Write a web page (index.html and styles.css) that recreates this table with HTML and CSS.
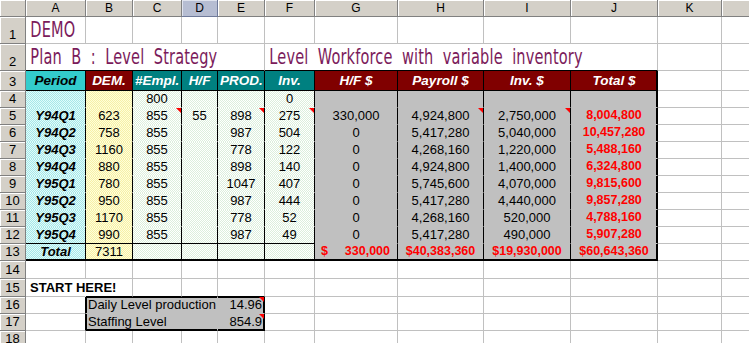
FILE: index.html
```html
<!DOCTYPE html>
<html>
<head>
<meta charset="utf-8">
<title>Level Strategy</title>
<link rel="stylesheet" href="styles.css">
</head>
<body>
<table class="sheet">
<colgroup>
<col class="w-rh"><col class="w-a"><col class="w-b"><col class="w-c"><col class="w-d"><col class="w-e"><col class="w-f"><col class="w-g"><col class="w-h"><col class="w-i"><col class="w-j"><col class="w-k"><col class="w-l">
</colgroup>
<tr class="r-hdr">
<td class="ch corner"></td><td class="ch">A</td><td class="ch">B</td><td class="ch">C</td><td class="ch sel">D</td><td class="ch">E</td><td class="ch">F</td><td class="ch">G</td><td class="ch">H</td><td class="ch">I</td><td class="ch">J</td><td class="ch">K</td><td class="ch"></td>
</tr>
<tr class="r-title">
<td class="rh">1</td><td class="tl"><span class="title">DEMO</span></td><td></td><td></td><td></td><td></td><td></td><td></td><td></td><td></td><td></td><td></td><td></td>
</tr>
<tr class="r-title">
<td class="rh">2</td><td class="tl top3" colspan="5"><span class="title">Plan B : Level Strategy</span></td><td class="tl top3" colspan="5"><span class="title">Level Workforce with variable inventory</span></td><td></td><td></td>
</tr>
<tr class="r-head">
<td class="rh">3</td><td class="hd h-cyan">Period</td><td class="hd h-red">DEM.</td><td class="hd h-teal">#Empl.</td><td class="hd h-teal">H/F</td><td class="hd h-teal">PROD.</td><td class="hd h-teal">Inv.</td><td class="hd h-red">H/F $</td><td class="hd h-red">Payroll $</td><td class="hd h-red">Inv. $</td><td class="hd h-red jr">Total $</td><td></td><td></td>
</tr>
<tr class="r-row">
<td class="rh">4</td><td class="pa"></td><td class="pb"></td><td class="pc">800</td><td class="pc"></td><td class="pc"></td><td class="pc">0</td><td class="pg"></td><td class="pg"></td><td class="pg"></td><td class="pg jr"></td><td></td><td></td>
</tr>
<tr class="r-row">
<td class="rh">5</td><td class="pa bi">Y94Q1</td><td class="pb">623</td><td class="pc note">855</td><td class="pc">55</td><td class="pc note">898</td><td class="pc note">275</td><td class="pg">330,000</td><td class="pg note">4,924,800</td><td class="pg note">2,750,000</td><td class="pg jr red">8,004,800</td><td></td><td></td>
</tr>
<tr class="r-row">
<td class="rh">6</td><td class="pa bi">Y94Q2</td><td class="pb">758</td><td class="pc">855</td><td class="pc"></td><td class="pc">987</td><td class="pc">504</td><td class="pg">0</td><td class="pg">5,417,280</td><td class="pg">5,040,000</td><td class="pg jr red">10,457,280</td><td></td><td></td>
</tr>
<tr class="r-row">
<td class="rh">7</td><td class="pa bi">Y94Q3</td><td class="pb">1160</td><td class="pc">855</td><td class="pc"></td><td class="pc">778</td><td class="pc">122</td><td class="pg">0</td><td class="pg">4,268,160</td><td class="pg">1,220,000</td><td class="pg jr red">5,488,160</td><td></td><td></td>
</tr>
<tr class="r-row">
<td class="rh">8</td><td class="pa bi">Y94Q4</td><td class="pb">880</td><td class="pc">855</td><td class="pc"></td><td class="pc">898</td><td class="pc">140</td><td class="pg">0</td><td class="pg">4,924,800</td><td class="pg">1,400,000</td><td class="pg jr red">6,324,800</td><td></td><td></td>
</tr>
<tr class="r-row">
<td class="rh">9</td><td class="pa bi">Y95Q1</td><td class="pb">780</td><td class="pc">855</td><td class="pc"></td><td class="pc">1047</td><td class="pc">407</td><td class="pg">0</td><td class="pg">5,745,600</td><td class="pg">4,070,000</td><td class="pg jr red">9,815,600</td><td></td><td></td>
</tr>
<tr class="r-row">
<td class="rh">10</td><td class="pa bi">Y95Q2</td><td class="pb">950</td><td class="pc">855</td><td class="pc"></td><td class="pc">987</td><td class="pc">444</td><td class="pg">0</td><td class="pg">5,417,280</td><td class="pg">4,440,000</td><td class="pg jr red">9,857,280</td><td></td><td></td>
</tr>
<tr class="r-row">
<td class="rh">11</td><td class="pa bi">Y95Q3</td><td class="pb">1170</td><td class="pc">855</td><td class="pc"></td><td class="pc">778</td><td class="pc">52</td><td class="pg">0</td><td class="pg">4,268,160</td><td class="pg">520,000</td><td class="pg jr red">4,788,160</td><td></td><td></td>
</tr>
<tr class="r-row">
<td class="rh">12</td><td class="pa bi b13">Y95Q4</td><td class="pb b13">990</td><td class="pc b13">855</td><td class="pc b13"></td><td class="pc b13">987</td><td class="pc b13">49</td><td class="pg">0</td><td class="pg">5,417,280</td><td class="pg">490,000</td><td class="pg jr red">5,907,280</td><td></td><td></td>
</tr>
<tr class="r-row">
<td class="rh">13</td><td class="pa bi last">Total</td><td class="pb last">7311</td><td class="pc last"></td><td class="pc last"></td><td class="pc last"></td><td class="pc last"></td><td class="pg last red tot acct"><span class="cur">$</span><span>330,000</span></td><td class="pg last red tot">$40,383,360</td><td class="pg last red tot">$19,930,000</td><td class="pg last jr red tot">$60,643,360</td><td></td><td></td>
</tr>
<tr class="r-18">
<td class="rh">14</td><td></td><td></td><td></td><td></td><td></td><td></td><td></td><td></td><td></td><td></td><td></td><td></td>
</tr>
<tr class="r-18">
<td class="rh">15</td><td class="tl start">START HERE!</td><td class="bx-top"></td><td class="bx-top"></td><td class="bx-top"></td><td class="bx-top"></td><td></td><td></td><td></td><td></td><td></td><td></td><td></td>
</tr>
<tr class="r-16">
<td class="rh">16</td><td class="bx-left"></td><td class="bx bx-tl tl" colspan="3">Daily Level production</td><td class="bx bx-tr tr note">14.96</td><td></td><td></td><td></td><td></td><td></td><td></td><td></td>
</tr>
<tr class="r-17">
<td class="rh">17</td><td class="bx-left"></td><td class="bx bx-bl tl" colspan="3">Staffing Level</td><td class="bx bx-br tr note">854.9</td><td></td><td></td><td></td><td></td><td></td><td></td><td></td>
</tr>
<tr class="r-17">
<td class="rh">18</td><td></td><td></td><td></td><td></td><td></td><td></td><td></td><td></td><td></td><td></td><td></td><td></td>
</tr>
</table>
</body>
</html>
```

FILE: styles.css
```css
html, body {
  margin: 0;
  padding: 0;
  overflow: hidden;
  background: #fff;
}

.sheet {
  border-collapse: separate;
  border-spacing: 0;
  table-layout: fixed;
  width: 786px;
  font-family: "Liberation Sans", Arial, sans-serif;
  font-size: 13px;
  color: #000;
}

.w-rh { width: 26px; }
.w-a { width: 60px; }
.w-b { width: 47px; }
.w-c { width: 49px; }
.w-d { width: 36px; }
.w-e { width: 47px; }
.w-f { width: 50px; }
.w-g { width: 83px; }
.w-h { width: 86px; }
.w-i { width: 87px; }
.w-j { width: 87px; }
.w-k { width: 64px; }
.w-l { width: 64px; }

.r-hdr { height: 17px; }
.r-title { height: 27px; }
.r-head { height: 20px; }
.r-row { height: 17px; }
.r-18 { height: 18px; }
.r-16 { height: 16px; }
.r-17 { height: 17px; }

.sheet td {
  border-right: 1px solid #c0c0c0;
  border-bottom: 1px solid #c0c0c0;
  padding: 0 2px 1px;
  text-align: center;
  vertical-align: bottom;
  white-space: nowrap;
  line-height: 15px;
  overflow: visible;
  position: relative;
}

/* headers */
.sheet .ch {
  background: #d4d0c8;
  border-right-color: #808080;
  border-bottom-color: #808080;
  box-shadow: inset 1px 1px 0 #fff;
  font-size: 12px;
  vertical-align: middle;
  padding: 0;
  line-height: 14px;
}
.sheet .ch.sel {
  background: #b6bdd2;
  border-right-color: #6f7a9a;
  border-bottom-color: #6f7a9a;
  box-shadow: inset 1px 1px 0 #dfe3ee;
}
.sheet .rh {
  background: #d4d0c8;
  border-right-color: #808080;
  border-bottom-color: #808080;
  box-shadow: inset 1px 1px 0 #fff;
  font-size: 13px;
  padding: 0 0 1px;
}

/* titles */
.sheet .tl { text-align: left; }
.sheet .tr { text-align: right; }
.title {
  display: inline-block;
  font-family: "DejaVu Sans Condensed", "DejaVu Sans", sans-serif;
  font-stretch: condensed;
  font-size: 21px;
  line-height: 24px;
  color: #7b1b5b;
  letter-spacing: 0.2px;
  word-spacing: 6px;
  transform: scaleX(0.77);
  transform-origin: 0 100%;
  padding-left: 3px;
}
.sheet .top3 {
  border-bottom-color: #000;
  border-right-color: #c0c0c0;
}

/* header row 3 */
.sheet .hd {
  font-weight: bold;
  font-style: italic;
  font-size: 13.5px;
  color: #fff;
  border-right-color: #000;
  border-bottom-color: #000;
  vertical-align: middle;
  padding: 0 2px;
}
.sheet .h-cyan { background: #33cccc; color: #000; }
.sheet .h-red { background: #800000; }
.sheet .h-teal { background: #008080; }

/* data regions */
.sheet .pa,
.sheet .pb,
.sheet .pc,
.sheet .pg {
  border-right-color: #000;
  border-bottom-color: transparent;
}
.sheet .pa {
  background: repeating-conic-gradient(#a6e8e8 0 25%, #e2fbfb 0 50%) 0 0 / 2px 2px;
}
.sheet .pb {
  background: repeating-conic-gradient(#f6efa8 0 25%, #ffffd8 0 50%) 0 0 / 2px 2px;
}
.sheet .pc {
  background: repeating-conic-gradient(#dcefdc 0 25%, #ffffff 0 50%) 0 0 / 2px 2px;
}
.sheet .pg {
  background: #c0c0c0;
}
.sheet .bi {
  font-weight: bold;
  font-style: italic;
}
.sheet .red {
  color: #ff0000;
  font-weight: bold;
  font-size: 12.5px;
}
.sheet .jr {
  border-right-color: #000;
  box-shadow: inset -1px 0 0 #000;
}
.sheet .b13 { border-bottom-color: #000; }
.sheet .last {
  border-bottom-color: #000;
  box-shadow: inset 0 -1px 0 #000;
}
.sheet .last.jr {
  box-shadow: inset -1px -1px 0 #000;
}
.sheet .acct {
  padding: 0 7px 1px 6px;
}
.acct .cur { float: left; }
.acct span:last-child { float: right; }

/* comment indicators */
.note::after {
  content: "";
  position: absolute;
  top: 0;
  right: 0;
  width: 0;
  height: 0;
  border-top: 5px solid #ff0000;
  border-left: 5px solid transparent;
}

/* start box */
.sheet .start {
  font-weight: bold;
  padding-left: 4px;
  border-right-color: transparent;
}
.sheet .bx-top { border-bottom-color: #000; }
.sheet .bx-left { border-right-color: #000; }
.sheet .bx {
  background: #c0c0c0;
  border-bottom-color: #c0c0c0;
}
.sheet .bx-tl { box-shadow: inset 1px 1px 0 #000; border-right-color: #c0c0c0; padding-left: 2px; }
.sheet .bx-tr { box-shadow: inset -1px 1px 0 #000; border-right-color: #000; }
.sheet .bx-bl { box-shadow: inset 1px -1px 0 #000; border-bottom-color: #000; }
.sheet .bx-br { box-shadow: inset -1px -1px 0 #000; border-right-color: #000; border-bottom-color: #000; }
```
